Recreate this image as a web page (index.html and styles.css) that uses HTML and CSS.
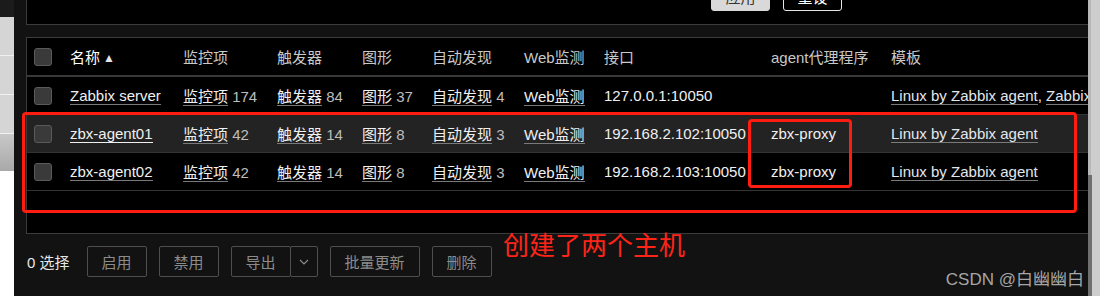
FILE: index.html
```html
<!DOCTYPE html>
<html lang="zh-CN">
<head>
    <meta charset="UTF-8">
    <meta name="viewport" content="width=device-width, initial-scale=1.0">
    <title>主机</title>
    <link rel="stylesheet" href="styles.css">
</head>
<body>
    <div class="screen">
        <div class="side-strip">
            <div class="strip-top"></div>
            <div class="strip-item"></div>
            <div class="strip-item"></div>
            <div class="strip-item"></div>
            <div class="strip-shade"></div>
        </div>

        <div class="main">
            <div class="filter-panel">
                <div class="filter-buttons">
                    <button class="btn-apply">应用</button>
                    <button class="btn-reset">重设</button>
                </div>
            </div>

            <div class="list-panel">
                <table class="hosts">
                    <colgroup>
                        <col class="c-check">
                        <col class="c-name">
                        <col class="c-items">
                        <col class="c-triggers">
                        <col class="c-graphs">
                        <col class="c-discovery">
                        <col class="c-web">
                        <col class="c-iface">
                        <col class="c-proxy">
                        <col>
                    </colgroup>
                    <thead>
                        <tr>
                            <th><span class="check"></span></th>
                            <th class="sorted">名称<span class="arrow">▲</span></th>
                            <th>监控项</th>
                            <th>触发器</th>
                            <th>图形</th>
                            <th>自动发现</th>
                            <th>Web监测</th>
                            <th>接口</th>
                            <th>agent代理程序</th>
                            <th>模板</th>
                        </tr>
                    </thead>
                    <tbody>
                        <tr>
                            <td><span class="check"></span></td>
                            <td><a class="lnk">Zabbix server</a></td>
                            <td><a class="lnk">监控项</a> <span class="num">174</span></td>
                            <td><a class="lnk">触发器</a> <span class="num">84</span></td>
                            <td><a class="lnk">图形</a> <span class="num">37</span></td>
                            <td><a class="lnk">自动发现</a> <span class="num">4</span></td>
                            <td><a class="lnk">Web监测</a></td>
                            <td>127.0.0.1:10050</td>
                            <td></td>
                            <td><a class="lnk tpl">Linux by Zabbix agent</a>, <a class="lnk tpl">Zabbix server health</a></td>
                        </tr>
                        <tr class="hover">
                            <td><span class="check"></span></td>
                            <td><a class="lnk active">zbx-agent01</a></td>
                            <td><a class="lnk">监控项</a> <span class="num">42</span></td>
                            <td><a class="lnk">触发器</a> <span class="num">14</span></td>
                            <td><a class="lnk">图形</a> <span class="num">8</span></td>
                            <td><a class="lnk">自动发现</a> <span class="num">3</span></td>
                            <td><a class="lnk">Web监测</a></td>
                            <td>192.168.2.102:10050</td>
                            <td class="proxy">zbx-proxy</td>
                            <td><a class="lnk tpl">Linux by Zabbix agent</a></td>
                        </tr>
                        <tr>
                            <td><span class="check"></span></td>
                            <td><a class="lnk">zbx-agent02</a></td>
                            <td><a class="lnk">监控项</a> <span class="num">42</span></td>
                            <td><a class="lnk">触发器</a> <span class="num">14</span></td>
                            <td><a class="lnk">图形</a> <span class="num">8</span></td>
                            <td><a class="lnk">自动发现</a> <span class="num">3</span></td>
                            <td><a class="lnk">Web监测</a></td>
                            <td>192.168.2.103:10050</td>
                            <td class="proxy">zbx-proxy</td>
                            <td><a class="lnk tpl">Linux by Zabbix agent</a></td>
                        </tr>
                    </tbody>
                </table>
            </div>

            <div class="actions">
                <span class="sel-count">0 选择</span>
                <button class="btn">启用</button>
                <button class="btn">禁用</button>
                <span class="split">
                    <button class="btn">导出</button><button class="btn btn-drop"><svg width="10" height="6" viewBox="0 0 10 6"><path d="M1 1l4 4 4-4" fill="none" stroke="#8c8c8c" stroke-width="1.2"/></svg></button>
                </span>
                <button class="btn btn-wide">批量更新</button>
                <button class="btn">删除</button>
            </div>
        </div>

        <div class="scrollbar">
            <div class="scroll-thumb"></div>
        </div>
    </div>

    <!-- screenshot annotations -->
    <div class="mark mark-rows"></div>
    <div class="mark mark-proxy"></div>
    <div class="mark-note">创建了两个主机</div>
    <div class="watermark">CSDN @白幽幽白</div>
</body>
</html>
```

FILE: styles.css
```css
body { margin: 0; width: 1100px; height: 296px; overflow: hidden; position: relative; background: #121212; font-family: "Liberation Sans", "Noto Sans CJK SC", sans-serif; font-size: 15px; }
.screen { display: flex; height: 296px; }

.side-strip { width: 14px; display: flex; flex-direction: column; background: #fff; }
.strip-top { height: 17px; background: #1b1b1b; }
.strip-item { height: 38px; background: #d5d5d5; border-bottom: 1px solid #f0f0f0; }
.strip-shade { height: 37px; background: linear-gradient(#c8c8c8, #a9a9a9); }

.main { flex: 1; min-width: 0; padding-left: 12px; background: #121212; }

.filter-panel { display: flex; align-items: flex-start; height: 25px; box-sizing: border-box; background: #000; border-left: 1px solid #3b3b3b; border-bottom: 1px solid #3b3b3b; }
.filter-buttons { display: flex; gap: 13px; margin-left: 684px; margin-top: -19px; }
.filter-buttons button { width: 59px; height: 30px; font: inherit; border-radius: 3px; }
.btn-apply { background: #d9d9d9; border: 1px solid #d9d9d9; color: #333; }
.btn-reset { background: #000; border: 1px solid #e6e6e6; color: #fff; }

.list-panel { margin-top: 12px; height: 197px; box-sizing: border-box; background: #000; border: 1px solid #3b3b3b; border-right: none; overflow: hidden; }

.hosts { width: 100%; table-layout: fixed; border-collapse: separate; border-spacing: 0; }
.c-check { width: 36px; }
.c-name { width: 113px; }
.c-items { width: 94px; }
.c-triggers { width: 85px; }
.c-graphs { width: 70px; }
.c-discovery { width: 92px; }
.c-web { width: 80px; }
.c-iface { width: 167px; }
.c-proxy { width: 120px; }

.hosts th, .hosts td { box-sizing: border-box; padding: 0 7px; text-align: left; white-space: nowrap; overflow: hidden; }
.hosts th { height: 39px; border-bottom: 2px solid #383838; font-weight: normal; color: #c9c9c9; }
.hosts td { height: 38px; border-bottom: 1px solid #333; color: #f0f0f0; }
.hosts tr.hover td { background: #232323; }
.hosts .sorted { color: #fff; }
.arrow { font-size: 12px; margin-left: 3px; color: #e6e6e6; position: relative; top: -1px; }

.check { display: inline-block; width: 18px; height: 18px; box-sizing: border-box; background: #3a3a3a; border: 1px solid #5a5a5a; border-radius: 3px; vertical-align: middle; }

.lnk { color: #f0f0f0; text-decoration: none; border-bottom: 1px solid #7a7a7a; }
.lnk.active { border-bottom-color: #f0f0f0; }
.lnk.tpl { color: #e3e8ee; }
.num { color: #bdbdbd; }
.proxy { color: #fff; }

.actions { display: flex; align-items: center; gap: 12px; padding-top: 12px; padding-left: 1px; }
.sel-count { color: #e8e8e8; margin-right: 5px; }
.btn { height: 31px; width: 60px; box-sizing: border-box; background: transparent; border: 1px solid #4e4e4e; border-radius: 2px; color: #8c8c8c; font: inherit; padding: 0; }
.btn-wide { width: 90px; }
.split { display: flex; }
.btn-drop { width: 28px; margin-left: -1px; display: flex; align-items: center; justify-content: center; }

.scrollbar { width: 12px; display: flex; flex-direction: column; background: #cdcdcd; border-left: 3px solid #b8b8b8; box-sizing: border-box; }
.scroll-thumb { margin-top: 175px; flex: 1; margin-left: -3px; border-left: 4px solid #6f6f6f; }

.mark { position: absolute; box-sizing: border-box; border: 3px solid #ff1d12; border-radius: 4px; }
.mark-rows { left: 22px; top: 112px; width: 1055px; height: 101px; }
.mark-proxy { left: 748px; top: 119px; width: 104px; height: 69px; }
.mark-note { position: absolute; left: 503px; top: 228px; font-size: 26px; line-height: 32px; color: #ff2418; font-family: "Noto Sans CJK SC", sans-serif; }
.watermark { position: absolute; right: 16px; top: 265px; font-size: 17px; color: #a6a6a6; }
```
